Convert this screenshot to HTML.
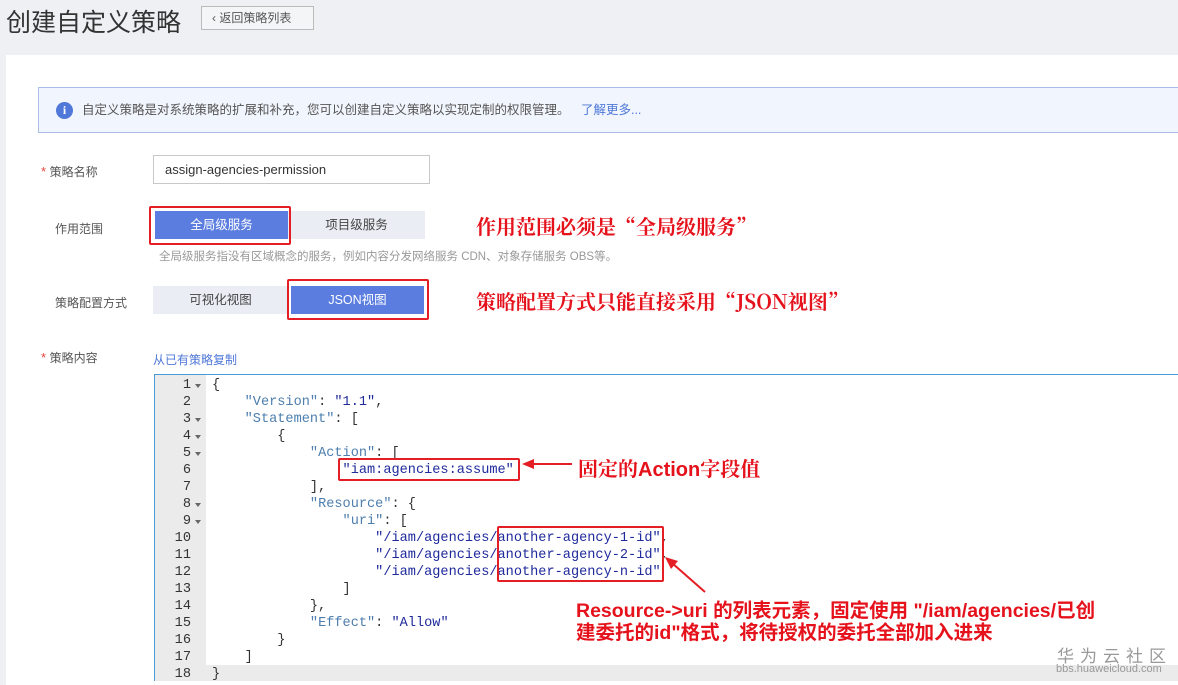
<!DOCTYPE html>
<html><head><meta charset="utf-8"><style>
*{margin:0;padding:0;box-sizing:border-box}
body{width:1178px;height:685px;overflow:hidden;background:#eef0f4;font-family:"Liberation Sans","Noto Sans CJK SC",sans-serif;position:relative;color:#333}
.a{position:absolute}
.panel{left:6px;top:55px;width:1172px;height:630px;background:#fff}
.title{left:6px;top:3px;font-size:25px;color:#333}
.back{left:201px;top:6px;width:113px;height:24px;border:1px solid #bbb;background:#f4f5f7;font-size:12px;color:#555;line-height:22px;padding-left:10px}
.info{left:38px;top:87px;width:1145px;height:46px;border:1px solid #a9bde6;background:#f1f5fd;font-size:12.5px;color:#555;line-height:44px;padding-left:43px}
.info i{position:absolute;left:17px;top:14px;width:17px;height:17px;border-radius:50%;background:#4f78d8;color:#fff;font-style:normal;font-weight:bold;font-size:12px;line-height:17px;text-align:center;font-family:"Liberation Serif",serif}
.lbl{font-size:12px;color:#555}
.star{color:#e6453a;font-size:13px}
.inp{left:153px;top:155px;width:277px;height:29px;border:1px solid #c8c8c8;font-size:13px;color:#333;line-height:27px;padding-left:11px}
.btn{height:28px;line-height:28px;text-align:center;font-size:12.5px}
.on{background:#5a7ddf;color:#fff}
.off{background:#eaedf4;color:#444}
.red{border:2px solid #e51d24;border-radius:2px}
.ann{color:#e5121c;font-size:20px;font-family:"Noto Serif CJK SC","Noto Sans CJK SC",serif;font-weight:bold}
.ed{left:154px;top:374px;width:1030px;height:307px;border:1px solid #4a9ad8;background:#fff}
.gut{left:0;top:0;width:51px;height:305px;background:#ebebeb}
.code{font-family:"Liberation Mono",monospace;font-size:13.6px;line-height:17px;white-space:pre}
.ln{left:0;top:2px;width:50px;color:#333}
.ln div{height:17px;position:relative;text-align:right;padding-right:14px}
.ln div.f::after{content:"";position:absolute;right:4px;top:7px;border-left:3px solid transparent;border-right:3px solid transparent;border-top:4px solid #666}
.tx{left:57px;top:2px;color:#333}
.k{color:#4d7eae}.s{color:#1f2a9c}
.ann2{color:#e5121c;font-size:19.5px;font-weight:bold;font-family:"Liberation Sans","Noto Sans CJK SC",sans-serif;line-height:22px}
</style></head><body>
<div class="a panel"></div>
<div class="a title">创建自定义策略</div>
<div class="a back">&#x2039; 返回策略列表</div>
<div class="a info"><i>i</i>自定义策略是对系统策略的扩展和补充，您可以创建自定义策略以实现定制的权限管理。 <span style="color:#4f78d8;margin-left:8px">了解更多...</span></div>

<div class="a lbl" style="left:41px;top:163px"><span class="star">* </span>策略名称</div>
<div class="a inp">assign-agencies-permission</div>

<div class="a lbl" style="left:55px;top:220px">作用范围</div>
<div class="a btn on" style="left:155px;top:211px;width:133px">全局级服务</div>
<div class="a btn off" style="left:288px;top:211px;width:137px">项目级服务</div>
<div class="a red" style="left:149px;top:206px;width:142px;height:39px"></div>
<div class="a" style="left:159px;top:248px;font-size:11.5px;color:#999">全局级服务指没有区域概念的服务，例如内容分发网络服务 CDN、对象存储服务 OBS等。</div>
<div class="a ann" style="left:476px;top:211px">作用范围必须是“全局级服务”</div>

<div class="a lbl" style="left:55px;top:294px">策略配置方式</div>
<div class="a btn off" style="left:153px;top:286px;width:135px">可视化视图</div>
<div class="a btn on" style="left:291px;top:286px;width:133px">JSON视图</div>
<div class="a red" style="left:287px;top:279px;width:142px;height:41px"></div>
<div class="a ann" style="left:476px;top:286px">策略配置方式只能直接采用“JSON视图”</div>

<div class="a lbl" style="left:41px;top:349px"><span class="star">* </span>策略内容</div>
<div class="a" style="left:153px;top:351px;font-size:12px;color:#4f78d8">从已有策略复制</div>

<div class="a ed">
<div class="a gut"></div>
<div class="a" style="left:0;top:290px;width:1030px;height:16px;background:#ebebeb"></div>
<div class="a code ln"><div class="f">1</div><div>2</div><div class="f">3</div><div class="f">4</div><div class="f">5</div><div>6</div><div>7</div><div class="f">8</div><div class="f">9</div><div>10</div><div>11</div><div>12</div><div>13</div><div>14</div><div>15</div><div>16</div><div>17</div><div>18</div></div>
<div class="a code tx">{
    <span class="k">"Version"</span>: <span class="s">"1.1"</span>,
    <span class="k">"Statement"</span>: [
        {
            <span class="k">"Action"</span>: [
                <span class="s">"iam:agencies:assume"</span>
            ],
            <span class="k">"Resource"</span>: {
                <span class="k">"uri"</span>: [
                    <span class="s">"/iam/agencies/another-agency-1-id"</span>,
                    <span class="s">"/iam/agencies/another-agency-2-id"</span>,
                    <span class="s">"/iam/agencies/another-agency-n-id"</span>
                ]
            },
            <span class="k">"Effect"</span>: <span class="s">"Allow"</span>
        }
    ]
}</div>
</div>
<div class="a red" style="left:338px;top:458px;width:182px;height:23px"></div>
<div class="a red" style="left:497px;top:526px;width:167px;height:56px"></div>
<svg class="a" style="left:0;top:0" width="1178" height="685">
<line x1="572" y1="464" x2="530" y2="464" stroke="#e51d24" stroke-width="2"/>
<polygon points="522,464 534,459 534,469" fill="#e51d24"/>
<line x1="705" y1="592" x2="672" y2="563" stroke="#e51d24" stroke-width="2"/>
<polygon points="665,557 678,561 671,569" fill="#e51d24"/>
</svg>
<div class="a ann" style="left:578px;top:453px">固定的<span style="font-family:'Liberation Sans',sans-serif">Action</span>字段值</div>
<div class="a ann2" style="left:576px;top:600px">Resource-&gt;uri 的列表元素，固定使用 "/iam/agencies/已创<br>建委托的id"格式，将待授权的委托全部加入进来</div>
<div class="a" style="left:1057px;top:642px;font-size:17px;color:#999;letter-spacing:6px">华为云社区</div>
<div class="a" style="left:1056px;top:663px;font-size:11px;color:#999">bbs.huaweicloud.com</div>
</body></html>
